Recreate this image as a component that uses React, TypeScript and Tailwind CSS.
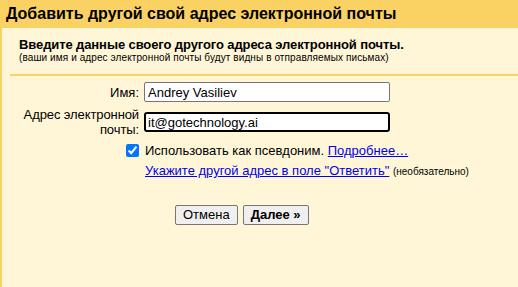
export default function App() {
  return (
    <div className="w-[518px] h-[287px] overflow-hidden bg-[#fff6d8] font-['Liberation_Sans',Arial,sans-serif] text-black">
      {/* Title bar */}
      <div className="h-[28px] bg-[#fad163] pl-[6px] text-[16px] font-bold leading-[28px]">
        Добавить другой свой адрес электронной почты
      </div>

      <div className="h-[259px] border-l-2 border-[#fad163]">
        {/* Intro */}
        <div className="pl-[17px] pt-[9px]">
          <div className="text-[13px] font-bold leading-[15px] tracking-[-0.1px]">
            Введите данные своего другого адреса электронной почты.
          </div>
          <div className="text-[10px] leading-[12px] tracking-[0.1px]">
            (ваши имя и адрес электронной почты будут видны в отправляемых письмах)
          </div>
        </div>
        <div className="ml-[8px] mt-[10px] h-[2px] bg-[#fad163]" />

        {/* Form */}
        <div className="mt-[6px] grid grid-cols-[137px_1fr] items-center gap-x-[5px] text-[13px]">
          <label className="text-right leading-[15px]">Имя:</label>
          <input
            readOnly
            value="Andrey Vasiliev"
            className="h-[20px] w-[246px] rounded-[2px] border border-[#767676] bg-white px-[3px] text-[13px] outline-none"
          />

          <label className="mt-[5px] ml-auto w-[118px] text-right leading-[15px] tracking-[-0.1px]">
            Адрес электронной почты:
          </label>
          <input
            readOnly
            value="it@gotechnology.ai"
            className="mt-[5px] h-[20px] w-[246px] rounded-[3px] border-2 border-black bg-white px-[2px] text-[13px] outline-none"
          />

          <div className="mt-[6px] flex justify-end">
            <input
              type="checkbox"
              checked
              readOnly
              className="m-0 h-[13px] w-[13px] accent-[#0075ff]"
            />
          </div>
          <div className="mt-[6px] pl-[1px] leading-[15px]">
            Использовать как псевдоним.{" "}
            <a href="#" className="text-[#0000ee] underline">
              Подробнее…
            </a>
          </div>

          <div />
          <div className="mt-[5px] pl-[1px] leading-[15px]">
            <a href="#" className="text-[#0000ee] underline">
              Укажите другой адрес в поле "Ответить"
            </a>{" "}
            <span className="text-[10px]">(необязательно)</span>
          </div>
        </div>

        {/* Buttons */}
        <div className="mt-[26px] flex gap-[5px] pl-[173px]">
          <button className="h-[20px] rounded-[2px] border border-[#767676] bg-[#efefef] px-[7px] text-[13px] leading-[18px]">
            Отмена
          </button>
          <button className="h-[20px] rounded-[2px] border border-[#767676] bg-[#efefef] px-[7px] text-[13px] font-bold leading-[18px]">
            Далее »
          </button>
        </div>
      </div>
    </div>
  );
}
